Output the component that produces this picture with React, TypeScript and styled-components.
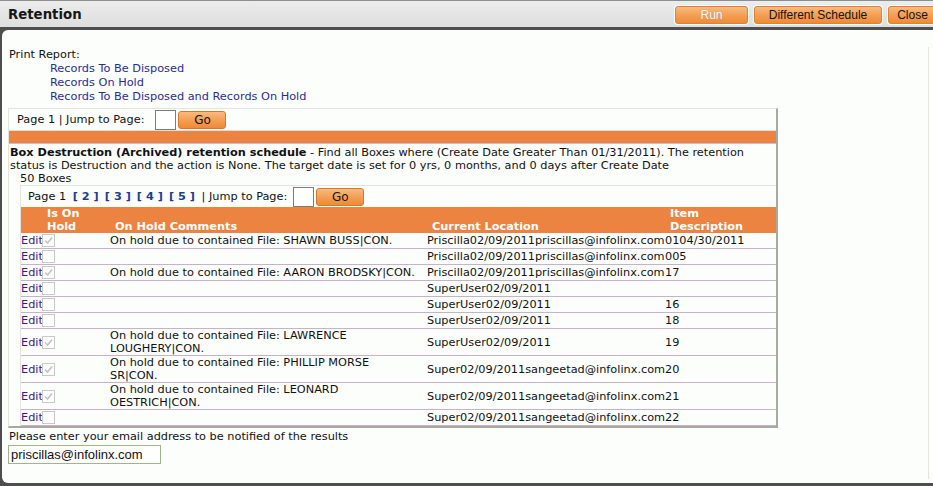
import React from "react";
import styled, { createGlobalStyle } from "styled-components";

const GlobalStyle = createGlobalStyle`
  html, body { margin: 0; padding: 0; }
  body { background: #4e4e4e; font-family: "DejaVu Sans", Verdana, sans-serif; }
`;

const Window = styled.div`
  width: 933px;
  height: 486px;
  display: flex;
  flex-direction: column;
  background: #4e4e4e;
  overflow: hidden;
`;

const TitleBar = styled.div`
  height: 27px;
  box-sizing: border-box;
  border-top: 1px solid #8e8e8e;
  background: linear-gradient(#ececec, #dedede);
  display: flex;
  align-items: flex-start;
  padding-left: 8px;
`;

const Title = styled.h1`
  margin: 6px 0 0 0;
  font: bold 13.3px "DejaVu Sans", Verdana, sans-serif;
  color: #161616;
`;

const Actions = styled.div`
  margin-left: auto;
  margin-right: -4px;
  margin-top: 5px;
  display: flex;
  gap: 6px;
`;

const ToolButton = styled.button<{ $w: number; $off?: boolean }>`
  width: ${(p) => p.$w}px;
  height: 18px;
  padding: 0;
  border: 1px solid #e2802e;
  border-radius: 3px;
  background: linear-gradient(#f9bb80, #f4a25a 45%, #ef8a34);
  box-shadow: 0 0 0 1px #ffffff;
  font: 12px "Liberation Sans", Arial, sans-serif;
  color: ${(p) => (p.$off ? "#fbfbfb" : "#141414")};
  text-shadow: ${(p) => (p.$off ? "0 0 1px #a08878" : "none")};
  cursor: pointer;
`;

const Panel = styled.div`
  flex: 1;
  margin: 3px 0 3px 2px;
  background: #fcfefc;
  border-radius: 6px 0 0 6px;
  display: flex;
`;

const Content = styled.div`
  flex: 1;
  padding: 18px 0 0 6px;
  font-size: 11.3px;
  line-height: 14px;
  color: #111;
`;

const ScrollEdge = styled.div`
  width: 4px;
  margin-top: 17px;
  margin-bottom: 4px;
  border-left: 1px solid #e3e3e3;
`;

const Label = styled.div`
  padding-left: 1px;
`;

const ReportLinks = styled.div`
  display: flex;
  flex-direction: column;
  padding-left: 42px;
`;

const Link = styled.a`
  color: #2a2a9c;
  text-decoration: none;
  cursor: pointer;
`;

const Outer = styled.div`
  margin-top: 4px;
  width: 770px;
  box-sizing: border-box;
  border-top: 1px solid #e4e4dc;
  border-left: 1px solid #e4e4dc;
  border-right: 2px solid #aaa99f;
  border-bottom: 2px solid #aaa99f;
`;

const Pager = styled.div<{ $pad: number; $gap: number }>`
  height: 21px;
  display: flex;
  align-items: center;
  padding-left: ${(p) => p.$pad}px;
  white-space: nowrap;
  & > input {
    margin-left: ${(p) => p.$gap}px;
  }
`;

const PageLink = styled.a`
  color: #1e3c8e;
  font-weight: bold;
  margin: 0 3px;
  cursor: pointer;
`;

const JumpInput = styled.input`
  width: 21px;
  height: 20px;
  box-sizing: border-box;
  border: 1px solid #7c7c7c;
  background: #fff;
  padding: 0;
  margin: 0;
`;

const GoButton = styled.button`
  width: 48px;
  height: 18px;
  margin-left: 2px;
  padding: 0;
  border: 1px solid #d9782c;
  border-radius: 3px;
  background: linear-gradient(#f9bb80, #f4a25a 45%, #ef8a34);
  font: 12px "DejaVu Sans", Verdana, sans-serif;
  color: #141414;
`;

const OrangeBar = styled.div`
  height: 12px;
  background: #ec8340;
  border-top: 1px solid #e2ded4;
  border-bottom: 1px solid #cbbbd8;
`;

const Description = styled.div`
  padding: 2px 0 0 1px;
  line-height: 13px;
  white-space: nowrap;
`;

const Count = styled.div`
  padding-left: 11px;
  line-height: 13px;
`;

const Inner = styled.div`
  margin-left: 11px;
  border-top: 1px solid #e4e4dc;
  border-left: 1px solid #e4e4dc;
`;

const cols = "21px 68px 317px 238px 1fr";

const HeadRow = styled.div`
  display: grid;
  grid-template-columns: ${cols};
  align-items: end;
  background: #ec8340;
  height: 26px;
  color: #fff;
  font-weight: bold;
  line-height: 13px;
`;

const HeadCell = styled.div`
  padding-left: 5px;
  white-space: nowrap;
`;

const Row = styled.div`
  display: grid;
  grid-template-columns: ${cols};
  align-items: center;
  min-height: 15px;
  border-bottom: 1px solid #c9b0cc;
  line-height: 13px;
  white-space: nowrap;
`;

const EditLink = styled.a`
  color: #3b1592;
  cursor: pointer;
`;

const Box = styled.span`
  width: 13px;
  height: 13px;
  box-sizing: border-box;
  border: 1px solid #c9c9c9;
  background: #fff;
  display: flex;
  align-items: center;
  justify-content: center;
`;

const EmailLabel = styled.div`
  margin-top: 2px;
  padding-left: 1px;
`;

const EmailInput = styled.input`
  margin-top: 1px;
  width: 153px;
  height: 19px;
  box-sizing: border-box;
  border: 1px solid #a3b38c;
  padding: 0 2px;
  font: 13px "Liberation Sans", Arial, sans-serif;
  color: #111;
  background: #fff;
`;

type Rec = { held: boolean; comment: string[]; loc: string; item: string };

const records: Rec[] = [
  { held: true, comment: ["On hold due to contained File: SHAWN BUSS|CON."], loc: "Priscilla02/09/2011priscillas@infolinx.com", item: "0104/30/2011" },
  { held: false, comment: [], loc: "Priscilla02/09/2011priscillas@infolinx.com", item: "005" },
  { held: true, comment: ["On hold due to contained File: AARON BRODSKY|CON."], loc: "Priscilla02/09/2011priscillas@infolinx.com", item: "17" },
  { held: false, comment: [], loc: "SuperUser02/09/2011", item: "" },
  { held: false, comment: [], loc: "SuperUser02/09/2011", item: "16" },
  { held: false, comment: [], loc: "SuperUser02/09/2011", item: "18" },
  { held: true, comment: ["On hold due to contained File: LAWRENCE", "LOUGHERY|CON."], loc: "SuperUser02/09/2011", item: "19" },
  { held: true, comment: ["On hold due to contained File: PHILLIP MORSE", "SR|CON."], loc: "Super02/09/2011sangeetad@infolinx.com", item: "20" },
  { held: true, comment: ["On hold due to contained File: LEONARD", "OESTRICH|CON."], loc: "Super02/09/2011sangeetad@infolinx.com", item: "21" },
  { held: false, comment: [], loc: "Super02/09/2011sangeetad@infolinx.com", item: "22" },
];

const Check = ({ on }: { on: boolean }) => (
  <Box>
    {on && (
      <svg width="9" height="9" viewBox="0 0 9 9">
        <path d="M1 4.5 L3.5 7 L8 1.5" fill="none" stroke="#c3c3c3" strokeWidth="1.6" />
      </svg>
    )}
  </Box>
);

export default function App() {
  return (
    <Window>
      <GlobalStyle />
      <TitleBar>
        <Title>Retention</Title>
        <Actions>
          <ToolButton $w={73} $off>Run</ToolButton>
          <ToolButton $w={128}>Different Schedule</ToolButton>
          <ToolButton $w={49}>Close</ToolButton>
        </Actions>
      </TitleBar>
      <Panel>
        <Content>
          <Label>Print Report:</Label>
          <ReportLinks>
            <Link>Records To Be Disposed</Link>
            <Link>Records On Hold</Link>
            <Link>Records To Be Disposed and Records On Hold</Link>
          </ReportLinks>
          <Outer>
            <Pager $pad={8} $gap={11}>
              Page 1 | Jump to Page:<JumpInput /><GoButton>Go</GoButton>
            </Pager>
            <OrangeBar />
            <Description>
              <b>Box Destruction (Archived) retention schedule</b> - Find all Boxes where (Create Date Greater Than 01/31/2011). The retention
              <br />
              status is Destruction and the action is None. The target date is set for 0 yrs, 0 months, and 0 days after Create Date
            </Description>
            <Count>50 Boxes</Count>
            <Inner>
              <Pager $pad={7} $gap={6}>
                Page 1&nbsp;<PageLink>[ 2 ]</PageLink> <PageLink>[ 3 ]</PageLink> <PageLink>[ 4 ]</PageLink> <PageLink>[ 5 ]</PageLink>&nbsp;| Jump to Page:<JumpInput /><GoButton>Go</GoButton>
              </Pager>
              <HeadRow>
                <HeadCell />
                <HeadCell>Is On<br />Hold</HeadCell>
                <HeadCell>On Hold Comments</HeadCell>
                <HeadCell>Current Location</HeadCell>
                <HeadCell>Item<br />Description</HeadCell>
              </HeadRow>
              {records.map((r, i) => (
                <Row key={i}>
                  <EditLink>Edit</EditLink>
                  <Check on={r.held} />
                  <div>
                    {r.comment.map((c, j) => (
                      <div key={j}>{c}</div>
                    ))}
                  </div>
                  <div>{r.loc}</div>
                  <div>{r.item}</div>
                </Row>
              ))}
            </Inner>
          </Outer>
          <EmailLabel>Please enter your email address to be notified of the results</EmailLabel>
          <EmailInput defaultValue="priscillas@infolinx.com" />
        </Content>
        <ScrollEdge />
      </Panel>
    </Window>
  );
}
